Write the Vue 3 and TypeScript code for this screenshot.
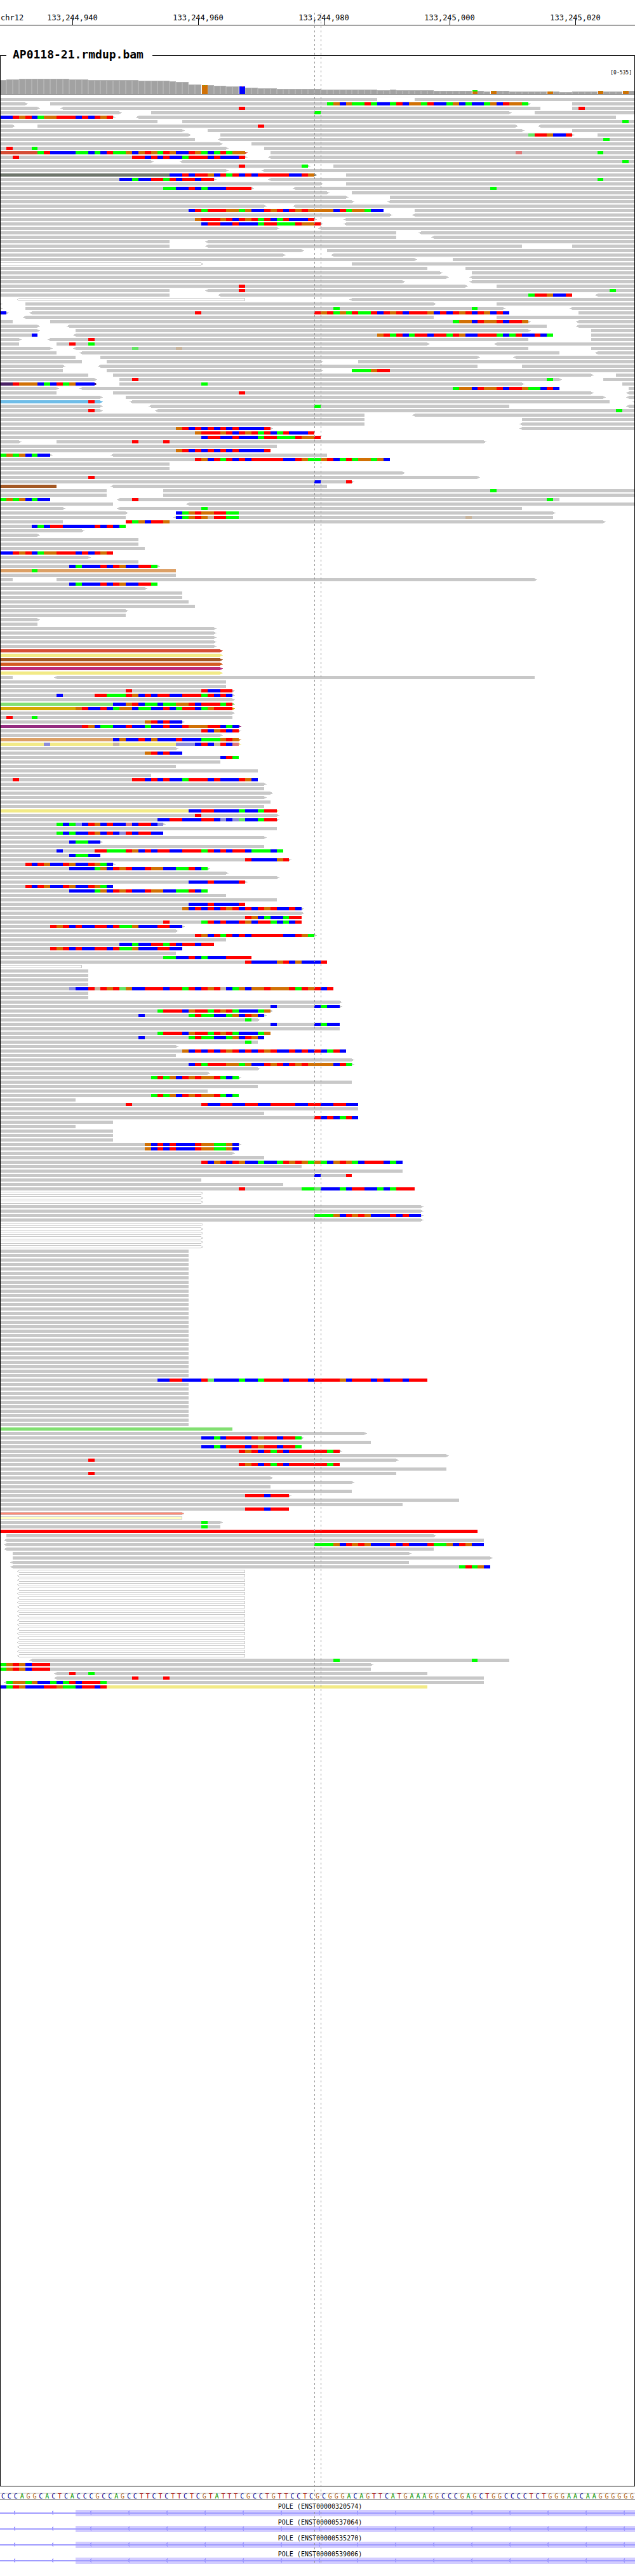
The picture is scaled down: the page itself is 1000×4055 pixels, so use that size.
<script setup lang="ts">
interface Piece {
  x: number
  width: number
  fill: string
}

interface Read {
  x: number
  end: number
  y: number
  left: boolean
  right: boolean
  fill: string
  stroke: string
  pieces: Piece[]
}

const BASES = 101
const WIDTH = 1000
const ROW_PITCH = 7
const READ_HEIGHT = 5

const edge = (base: number): number => Math.round((base * WIDTH) / BASES)

const ticks = ['133,244,940', '133,244,960', '133,244,980', '133,245,000', '133,245,020']

const sequence =
  'CCCAGGCACTCACCCGCCAGCCTTCTCTTCTCGTATTTCGCCTGTTCCTCG' +
  'CGGGACAGTTCATGAAAGGCCCGAGCTGGCCCCTCTGGGAACAAGGGGGG'

const transcripts = ['ENST00000320574', 'ENST00000537064', 'ENST00000535270', 'ENST00000539006']
const strandMarks = Array.from({ length: 17 }, (_, i) => 21 + i * 60)

// Lower case letters are calls of low quality.
const baseColors: Record<string, string> = {
  A: '#00ff00', C: '#0000ff', G: '#d17105', T: '#ff0000',
  a: '#64e464', c: '#8c8cd8', g: '#c8b49c', t: '#de7878',
}

const readColors: Record<string, string> = {
  rust: '#d54d35', slate: '#6e766c', violet: '#4b2366', sky: '#6fbde8', brown: '#a35824',
  tan: '#dca066', yellow: '#f2ea86', orange: '#d35c22', magenta: '#ba2d7a', green: '#82df72',
  gold: '#d6a900', plum: '#942c80', red: '#ff0000',
}

// Reads whose mapping is ambiguous or improperly paired are outlined.
const outlinedColors: Record<string, string> = {
  hollow: '#ffffff', salmon: '#ff8a75', cream: '#ffffc4',
}

// One line per packed row: start-end in bases, < or > for strand tips,
// /name for a colour, @base for mismatches, and *n to repeat a row.
const packed = `
0-60 66-101
0-4> 8-84>@52AGCGAATACCATCGGATCCAGCACCAGCTGGA 91-101
0-6> <10-86@38T 91-101@92T
0-19> 24-81>@50A 85-101
0-18>@0CCTGTCAGGTTTCTCTGT <22-98
0-25 29-101@99A
0-2> 6-82>@41T <86-101
0-29> 33-83> 91-101
0-30> 35-91>@84aTTGCCT 95-101
0-31 <35-101@96A
0-35> 40-101
0-36>@1T@5A 42-101
0-39>/rust@6ATCCCCAACACTAAGCGTGATGCCTGACATAGG 43-101@82t@95A
0-39>@2T@21TTCTCTCCATTTCTCCCT <43-101
0-24> <29-101@99A
0-49>@38T@48A 53-101
0-36> <42-101
0-50>/slate@27CCTCTTGCTATCTCTTTTTCCTG 55-101
0-34>@19CCACCTTATCTTCTT <43-101@95A
0-51> 55-101
0-40>@26AACCTCACCCTTTT <47-101@78A
0-52> 56-101
0-55> 62-101
0-56> <62-101
0-42> <47-101
0-61@30CTATTTGGAGCCTGTCTGTGGGGCTAGGACC 66-101
0-62> <66-101
0-50>@31GTTTGTCTGTATCATCCCT <55-101
0-51>@32CTTCCTCCCATTAAATGGT <55-101
0-44> <51-101
0-63 <67-101
0-63 <69-101
0-27 <33-101
0-27 <33-83 91-101
0-48> 52-101
0-45> <53-101
0-66> 72-101
0-32>/hollow 56-101
0-68 74-101
0-70> 75-101
0-71> <75-101
0-64> <75-101
0-74>@38T 79-101
0-27 <33-101@38T@97A
0-27 <35-91@84ATTGCCT <95-101
<3-39/hollow <56-101
0-0> 4-69> 79-101
0-0> 4-80>@53A@75A <91-101
0-1>@0C <5-81@31T@50TGTAGATAATCTGTCTTTGCTCTGTCTGCTC 92-101
<4-69 79-101
0-2 8-84>@72AGGCTGGTCTTG <92-101
0-6> <11-87 <92-101
0-6> 12-84> 94-101
0-6@5C <12-88@60GTATCATTCTTATGCCTTTACATCCTCA 94-101
0-3> <8-84@14T 94-101
0-3 9-68>@11T@14A <79-101
0-8> <12-84@21a@28g 94-101
0-9 <13-89 <95-101
0-12 16-76> <82-101
0-13 17-51> 57-101
0-10> <16-76 83-101
0-10 17-51> 56-101@56AAAGTT
0-14 18-94> 98-101
0-15> 19-89>@21T@87A 96-101
0-15>/violet@2TGGGCACTAGCCC 19-83>@32A 99-101
0-9> <13-89@72AGGCTGGTCTTGAACTC 100-101
0-9 18-94>@38T <100-101
0-16> 20-96> <100-101
0-16>/sky@14T <21-97 <101-101
0-16> <24-81@50A <100-101
0-16>@14T <25-101@98A
0-58 <66-101
0-58 83-101
0-58 <83-101
0-43>@28GTCTCTCTCTCCCCT <83-101
0-50@31GTTTGTCTGTATCATCCCT
0-51@32CTTCCTCCCATTAAATGGT
0-3> 9-77>@21T@26T
0-44
0-43@28GTCTCTCTCTCCCCT
0-8>@0AGAGCACC <18-52
0-62@31TGCTATCTCTTTTTCCTGAAGTCATAGGAGC
0-27 *2
0-64>
0-76>@14T
0-56>@50C@55T
0-9/brown <18-52
0-17 26-101@78A
0-17 26-101
0-8@0AGAGCACC <19-89@21T@87A
0-18 <30-101
0-10> <19-83@32A
0-20> 28-88>@28CAGTGGTTAA
0-20 <28-88@28CAGTGgTTAA@74g
0-10 20-96>@20TAGCTTG
0-20@5CACTTCCCCCTCTCA
0-13>
0-6>
0-22 *2
0-23
0-18@0CCTGTCAGGTTTCTCTGT
0-14>
0-22
0-25>@11CACCCTCTGCCTTA
0-28/tan@5A
0-28
0-2 9-85>
0-25@11CACCCTCTGCCTTA
0-23>
0-29 *2
0-30
0-31
0-20>
0-20
0-6>
0-6
0-34> *5
0-35>/rust
0-35>/yellow
0-35>/brown
0-35>/orange
0-35>/magenta
0-35>/yellow
0-2 <9-85
0-36 *2
0-37>@20T@32TCCTT
0-37>@9C@15TTAAATGCTCTTCCTTTATCTC
0-37>
0-37>/green@18CCGTCAACAAGGTCTTTAT
0-37>/gold@12GTCCTCAGGCAACCTCATTCAGTTT
0-37>
0-37@1T@5A
0-29>@23GTCTCC
0-38>/plum@13TGCAACCTCCACCTCCTGGGTTCAC
0-38>@32TCGTCT
0-35>
0-38>/tan@18CGCCTCGCCCTCCCAAAGTG
0-38>/yellow@7c@18g@28cccCTCgTCt
0-28>
0-29@23GTCTCC
0-38@35CTA
0-35
0-28
0-41
0-24
0-41@2T@21TTCTCTCCATTTCTCCCTGC
0-42>
0-42
0-43>
0-42>
0-43
0-42
0-44>/yellow@30CCTTCCCCACCATT
0-44>@31T
0-44>@25CCTTCCCTTCcCcaCCATT
0-26>@9ACAcCTGCTCCtCTTCc
0-44
0-26@9ACACCTGCTCcTCTTCC
0-42>
0-16>@11CAACC
0-42
0-45@9C@15TTAAATGCTCTTCCTTTATCTCTTCAAACA
0-16@11CAACC
0-46>@39TCCCCGT
0-18>@4TCTGCCTGCCTGAC
0-33>@11CCCCAGCTGTCCTGGCCAATCA
0-36>
0-44>
0-39>@30CCCTCCCCT
0-18@4TCTGCCTGCCTGAC
0-33@11CCCCAGCTGTCCTGGCCAATCA
0-36
0-44
0-39@30CCCTCCCCT
0-48>@29GCTCTCTGTCTCTGTCCTC
0-48>
0-48@39TGCACCATT
0-48@26T@32ATCTCCTGCTTACACT
0-29>@8TGTCTCCTTCTAAGCCCTTCC
0-28>
0-50>@31TGCTATCTCTTTTTCCTGA
0-36
0-34@19CCACCTTATCTTCTT
0-29@8TGTCTCCTTCTAAGCCCTTCC
0-28
0-40@26AACCTCACCCTTTT
0-52@39TCCCCGTCGCCCT
0-13/hollow
0-14 *4
0-53@11cCCTgTGTaGCCTTTCTTATCTGTgCAGCGGTGGGTATGTCT
0-14 *2
0-54>
0-54>@43C@50CACC
0-43>@25ATTTCGTTATGTACCCAG
0-42>@22C@30ATAACCAGCTGC
0-41>@39A
0-54@43C@50CACC
0-54
0-43@25ATTTCGTTATGTACCCAG
0-42@22C@30ATAACCAGCTGC
0-41@39A
0-28>
0-55@29GCTCTCTGTCTCTGTCCTCTCTCATC
0-28
0-56>
0-56>@30CTATTTGGAGCCTGTCTGTGGGGCTA
0-41>
0-33>
0-38>@24ATAGCTGTGGTACA
0-56
0-41
0-33
0-38@24ATAGCTGTGGTACA
0-12
0-57@20T@32TCCTTCCTTCCTTTTCCTTCCTTCC
0-57
0-42
0-57@50TCTCATC
0-18
0-12
0-18 *3
0-38>@23GCTCTCCCTGGAAGC
0-38@23GCTCTCCCTGGAAGC
0-37>
0-42
0-64@32TCGTCTGCCACCATGTGAGACGTGACTTTCAC
0-48
0-64
0-56@50C@55T
0-32
0-45
0-66@38T@48AAaCCCACTTCCACATTT
0-32>/hollow *3
0-67> *2
0-67>@50AAAGCTGTGCCCTCTCC
0-67>
0-32>/hollow *6
0-30 *29
0-68@25CCTTCCCTaCCCCACCATTTCTTTCTTTTGCTTTCTCTTCTTT
0-30 *10
0-37/green
0-58>
0-48>@32CCACTTTCTGTTCTTA
0-59
0-48@32CCACTTTCTGTTCTTA
0-54>@38TGTCTATCTTTTTTAT
0-71>
0-63>@14T
0-54@38TGTCTATCTTTTTTAT
0-71
0-63@14T
0-43>
0-56>
0-43
0-56
0-46>@39TTTCTTT
0-73
0-64
0-46@39TTTCTTT
0-29>/salmon
0-29/cream
0-35>@32A
0-35@32A
0-76/red
1-69>
<1-77
<1-77@50AAAGCTGTGCCCTCTCCCTAAGCTGCC
<1-69
2-65>
2-78>
<2-65
<2-78@73ATAGC
<3-39/hollow *20
<5-81@53A@75A
0-59>@0AGTGCTTT
0-59@0AGTGCTTT
<9-68@11T@14A
<9-77@21T@26T
<1-77@1AGGAGCCACATCTTTA
0-68/yellow@0CATGCCCTTGAACTTCT
`

function parseRead(token: string, y: number): Read {
  const m = /^(<?)(\d+)-(\d+)(>?)(?:\/(\w+))?(.*)$/.exec(token)!
  const outlined = m[5] !== undefined && m[5] in outlinedColors
  const pieces: Piece[] = []
  for (const run of m[6].matchAll(/@(\d+)([A-Za-z]+)/g)) {
    const start = Number(run[1])
    for (const same of run[2].matchAll(/(.)\1*/g)) {
      const from = edge(start + same.index!)
      const to = edge(start + same.index! + same[0].length)
      pieces.push({ x: from, width: to - from, fill: baseColors[same[1]] })
    }
  }
  const start = Number(m[2])
  return {
    x: start === 0 ? -6 : edge(start),
    end: edge(Number(m[3])),
    y,
    left: m[1] === '<',
    right: m[4] === '>',
    fill: outlined ? outlinedColors[m[5]] : m[5] ? readColors[m[5]] : '#c8c8c8',
    stroke: outlined ? '#c8c8c8' : 'none',
    pieces,
  }
}

const reads: Read[] = []
let rowCount = 0
for (const line of packed.trim().split('\n')) {
  const tokens = line.split(' ')
  const last = tokens[tokens.length - 1]
  const times = last.startsWith('*') ? Number(tokens.pop()!.slice(1)) : 1
  for (let i = 0; i < times; i++) {
    for (const token of tokens) reads.push(parseRead(token, rowCount * ROW_PITCH))
    rowCount++
  }
}
const readsHeight = rowCount * ROW_PITCH

function solidPath(r: Read): string {
  let d = `M${r.x} ${r.y}H${r.end}`
  d += r.right ? 'v1h2v1h2v1h-2v1h-2v1' : `v${READ_HEIGHT}`
  d += `H${r.x}`
  d += r.left ? 'v-1h-2v-1h-2v-1h2v-1h2v-1' : ''
  return d + 'Z'
}

function outlinePath(r: Read): string {
  const top = r.y + 0.5
  let d = `M${r.x + 0.5} ${top}H${r.end - 0.5}`
  d += r.right ? 'l3 2l-3 2' : 'v4'
  d += `H${r.x + 0.5}`
  d += r.left ? 'l-3 -2' : ''
  return d + 'Z'
}

// Height of the coverage histogram, as [number of bases, bar height].
const coverageRuns: [number, number][] = [
  [1, 22], [2, 23], [8, 24], [3, 23], [8, 22], [5, 21], [1, 20], [2, 19], [2, 15], [2, 14],
  [2, 13], [3, 12], [2, 10], [3, 9], [7, 8], [9, 7], [2, 6], [1, 7], [6, 6], [6, 5], [1, 6],
  [1, 5], [1, 4], [3, 5], [8, 4], [2, 3], [4, 4], [1, 5], [3, 4], [2, 5],
]
const variants: Record<number, [string, string, number]> = {
  32: ['G', 'A', 1], 38: ['C', 'T', 1], 75: ['G', 'A', 2], 78: ['G', 'A', 1],
  87: ['G', 'A', 1], 95: ['G', 'A', 1], 99: ['G', 'A', 1],
}
const bars = coverageRuns
  .flatMap(([n, h]) => Array<number>(n).fill(h))
  .map((height, base) => {
    const x = edge(base)
    const v = variants[base]
    return {
      x,
      width: edge(base + 1) - x,
      height,
      fill: v ? baseColors[v[0]] : '#a2a2a2',
      minor: v ? baseColors[v[1]] : '',
      minorHeight: v ? v[2] : 0,
    }
  })
</script>

<template>
  <main class="browser">
    <header class="ruler">
      <span class="chrom">chr12</span>
      <span v-for="t in ticks" :key="t" class="tick">{{ t }}</span>
    </header>

    <fieldset class="panel">
      <legend>AP0118-21.rmdup.bam</legend>
      <div class="range">[0-535]</div>
      <svg class="coverage" viewBox="1 0 998 25" height="25" preserveAspectRatio="none" shape-rendering="crispEdges">
        <g v-for="b in bars" :key="b.x">
          <template v-if="b.minor">
            <rect :x="b.x + 1" :y="24 - b.height" :width="b.width - 1" :height="b.height" :fill="b.fill" />
            <rect
              :x="b.minorHeight > 1 ? b.x + 1 : b.x + 5"
              :y="24 - b.height"
              :width="b.minorHeight > 1 ? b.width - 1 : 1"
              :height="b.minorHeight"
              :fill="b.minor"
            />
          </template>
          <template v-else>
            <rect :x="b.x" :y="24 - b.height" :width="b.width" :height="b.height" fill="#b2b2b2" />
            <rect :x="b.x + 1" :y="25 - b.height" :width="b.width - 2" :height="b.height - 1" :fill="b.fill" />
          </template>
        </g>
        <rect x="0" y="24" width="1000" height="1" fill="#787878" />
      </svg>
      <svg
        class="reads"
        :viewBox="`1 0 998 ${readsHeight}`"
        :height="readsHeight"
        preserveAspectRatio="none"
        shape-rendering="crispEdges"
      >
        <g v-for="(r, i) in reads" :key="i">
          <path :d="r.stroke === 'none' ? solidPath(r) : outlinePath(r)" :fill="r.fill" :stroke="r.stroke" />
          <rect
            v-for="p in r.pieces"
            :key="p.x"
            :x="p.x"
            :y="r.y"
            :width="p.width"
            :height="READ_HEIGHT"
            :fill="p.fill"
          />
        </g>
      </svg>
    </fieldset>

    <div class="sequence">
      <span v-for="(b, i) in sequence" :key="i" :class="b">{{ b }}</span>
    </div>

    <section class="genes">
      <div v-for="t in transcripts" :key="t" class="gene">
        <div class="name">POLE ({{ t }})</div>
        <svg viewBox="0 0 1000 10" height="10" preserveAspectRatio="none" shape-rendering="crispEdges">
          <rect x="119" y="0" width="881" height="10" fill="#d2ccff" />
          <rect x="0" y="4" width="1000" height="2" fill="#a09cff" />
          <path v-for="x in strandMarks" :key="x" :d="`M${x} 4h1v-2h1v-1h1v7h-1v-1h-1v-2h-1z`" fill="#a09cff" />
        </svg>
      </div>
    </section>

    <div class="guides"></div>
  </main>
</template>

<style>
body {
  background: #fff;
}
</style>

<style scoped>
.browser {
  position: relative;
  overflow: hidden;
  padding-bottom: 19px;
  font-family: "DejaVu Sans Mono", monospace;
  color: #000;
}

svg {
  display: block;
  width: 100%;
}

.ruler {
  position: relative;
  display: flex;
  height: 39px;
  border-bottom: 1px solid #000;
  font-size: 12px;
  line-height: 14px;
  overflow: hidden;
}

.ruler::before {
  content: "";
  flex: 0 0 1.5%;
}

.chrom {
  position: absolute;
  left: 1px;
  top: 21px;
}

.tick {
  position: relative;
  flex: 0 0 19.8%;
  padding-top: 21px;
  text-align: center;
}

.tick::after {
  content: "";
  position: absolute;
  left: 50%;
  bottom: 0;
  width: 1px;
  height: 9px;
  background: #000;
}

.panel {
  min-width: 0;
  margin: 35px 0 0;
  padding: 0 0 1253px;
  border: 1px solid #000;
}

.panel legend {
  margin-left: 9px;
  padding: 0 14px 4px 10px;
  font-size: 18px;
  font-weight: bold;
  line-height: 21px;
}

.range {
  padding: 9px 4px 3px 0;
  font-size: 8px;
  line-height: 12px;
  text-align: right;
}

.reads {
  margin-top: 5px;
}

.sequence {
  display: grid;
  grid-template-columns: repeat(101, 1fr);
  height: 9px;
  margin-top: 10px;
  border-top: 1px solid #a0a0a0;
  border-bottom: 1px solid #a0a0a0;
  font-size: 10px;
  line-height: 9px;
  text-align: center;
}

.sequence .A {
  color: #009600;
}

.sequence .C {
  color: #000096;
}

.sequence .G {
  color: #b46414;
}

.sequence .T {
  color: #b40000;
}

.genes {
  padding-top: 1px;
}

.name {
  padding: 5px 0 0 8px;
  font-size: 10px;
  line-height: 10px;
  text-align: center;
}

.guides {
  position: absolute;
  top: 20px;
  bottom: 21px;
  left: 49.5%;
  width: 1%;
  padding-right: 1px;
  background:
    repeating-linear-gradient(#969696 0 3px, transparent 3px 7px) left / 1px 100% no-repeat,
    repeating-linear-gradient(#969696 0 3px, transparent 3px 7px) right / 1px 100% no-repeat;
  pointer-events: none;
}
</style>
